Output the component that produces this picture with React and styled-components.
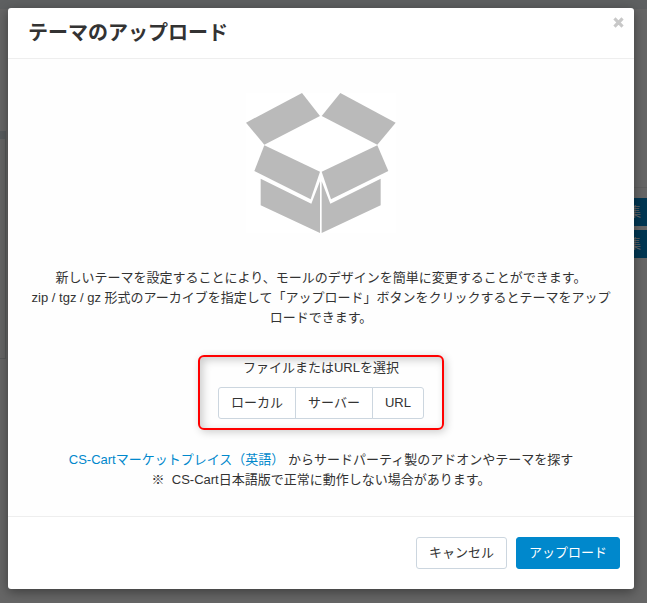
/* eslint-disable react/prop-types */
import styled, { createGlobalStyle } from 'styled-components'

const GlobalStyle = createGlobalStyle`
  *,
  *::before,
  *::after {
    box-sizing: border-box;
  }

  body {
    margin: 0;
    background-color: #fff;
    color: #333;
    font-family: 'Liberation Sans', 'Noto Sans CJK JP', sans-serif;
    font-size: 13px;
    line-height: 20px;
  }

  h3,
  p {
    margin: 0;
  }
`

const Page = styled.div`
  position: relative;
  min-height: 100vh;
  overflow: hidden;
`

const Under = styled.div`
  position: absolute;
  inset: 0;
`

const TopBar = styled.div`
  height: 9px;
  background-color: #eceff3;
`

const PageContent = styled.div`
  display: flex;
  justify-content: space-between;
`

const SidePanel = styled.div`
  width: 6px;
  height: 228px;
  margin-top: 122px;
  border: 1px solid #dde0e4;
  border-left: none;
  border-top: 8px solid #dde5ea;
`

const PageActions = styled.div`
  display: flex;
  flex-direction: column;
  gap: 4px;
  width: 40px;
  margin-top: 178px;
  padding-top: 10px;
  border-top: 1px solid #eee;
`

const EditButton = styled.button`
  height: 28px;
  padding: 0 6px;
  border: none;
  background-color: #08c;
  color: #fff;
  font: inherit;
  text-align: right;
  white-space: nowrap;
`

const Backdrop = styled.div`
  position: absolute;
  inset: 0;
  background-color: rgba(0, 0, 0, 0.6);
`

const DialogArea = styled.div`
  position: relative;
  z-index: 1;
  padding: 8px 13px 14px 8px;
`

const Dialog = styled.section`
  border-radius: 3px;
  background-color: #fff;
  box-shadow: 0 3px 12px rgba(0, 0, 0, 0.4);
`

const DialogHeader = styled.header`
  display: flex;
  align-items: flex-start;
  justify-content: space-between;
  height: 51px;
  padding: 9px 10px 0 20px;
  border-bottom: 1px solid #eee;
`

const Title = styled.h3`
  font-size: 20px;
  font-weight: bold;
  line-height: 32px;
`

const CloseButton = styled.button`
  display: flex;
  padding: 0;
  border: none;
  background: none;
  color: #c8c8c8;
  cursor: pointer;

  &:hover {
    color: #888;
  }
`

const DialogBody = styled.div`
  display: flex;
  flex-direction: column;
  align-items: center;
  padding: 34px 20px 26px;
  background-color: #fefefe;
  text-align: center;
`

const BoxIcon = styled.svg`
  width: 150px;
  height: 140px;
  background-color: #fff;
  fill: #bababa;
`

const Description = styled.div`
  margin: 35px 0 27px;
`

const FileChooser = styled.div`
  display: flex;
  flex-direction: column;
  align-items: center;
  gap: 9px;
  padding: 1px 18px 9px;
  border: 2px solid #f00;
  border-radius: 6px;
  box-shadow:
    2px 2px 8px rgba(0, 0, 0, 0.2),
    inset 3px 3px 8px rgba(0, 0, 0, 0.2);
`

const Button = styled.button`
  height: 32px;
  padding: 0 12px;
  border: 1px solid ${(props) => (props.$primary ? '#08c' : '#ccd6df')};
  border-radius: 3px;
  background-color: ${(props) => (props.$primary ? '#08c' : '#fff')};
  color: ${(props) => (props.$primary ? '#fff' : '#333')};
  font: inherit;
  cursor: pointer;
`

const ButtonGroup = styled.div`
  display: flex;

  ${Button} {
    border-radius: 0;
  }

  ${Button} + ${Button} {
    margin-left: -1px;
  }

  ${Button}:first-child {
    border-radius: 3px 0 0 3px;
  }

  ${Button}:last-child {
    border-radius: 0 3px 3px 0;
  }
`

const Marketplace = styled.div`
  margin-top: 20px;
`

const Link = styled.a`
  color: #08c;
  text-decoration: none;

  &:hover {
    text-decoration: underline;
  }
`

const DialogFooter = styled.footer`
  display: flex;
  justify-content: flex-end;
  gap: 9px;
  padding: 20px 14px;
  border-top: 1px solid #eee;
`

const sources = ['ローカル', 'サーバー', 'URL']

function OpenBox() {
  return (
    <BoxIcon viewBox="48 38 450 420" aria-hidden="true">
      <polygon points="216,38 270,107 103,193 48,127" />
      <polygon points="331,38 497,127 442,193 275,107" />
      <polygon points="103,195 270,274 242,357 73,272" />
      <polygon points="442,195 475,272 303,357 275,274" />
      <polygon points="92,295 244,370 270,303 270,458 92,375" />
      <polygon points="452,295 301,370 275,303 275,458 452,375" />
    </BoxIcon>
  )
}

function App() {
  return (
    <Page>
      <GlobalStyle />
      <Under aria-hidden="true">
        <TopBar />
        <PageContent>
          <SidePanel />
          <PageActions>
            <EditButton tabIndex={-1}>編集</EditButton>
            <EditButton tabIndex={-1}>編集</EditButton>
          </PageActions>
        </PageContent>
      </Under>
      <Backdrop />

      <DialogArea>
        <Dialog role="dialog" aria-labelledby="dialog-title">
          <DialogHeader>
            <Title id="dialog-title">テーマのアップロード</Title>
            <CloseButton aria-label="閉じる">
              <svg width="11" height="11" viewBox="0 0 11 11">
                <path
                  d="M2.6 2.6l5.8 5.8M8.4 2.6L2.6 8.4"
                  stroke="currentColor"
                  strokeWidth="3.2"
                  strokeLinecap="square"
                />
              </svg>
            </CloseButton>
          </DialogHeader>

          <DialogBody>
            <OpenBox />
            <Description>
              <p>
                新しいテーマを設定することにより、モールのデザインを簡単に変更することができます。
              </p>
              <p>
                zip / tgz / gz
                形式のアーカイブを指定して「アップロード」ボタンをクリックするとテーマをアップロードできます。
              </p>
            </Description>

            <FileChooser role="group" aria-labelledby="chooser-label">
              <span id="chooser-label">ファイルまたはURLを選択</span>
              <ButtonGroup>
                {sources.map((source) => (
                  <Button key={source}>{source}</Button>
                ))}
              </ButtonGroup>
            </FileChooser>

            <Marketplace>
              <p>
                <Link href="#marketplace">
                  CS-Cartマーケットプレイス（英語）
                </Link>{' '}
                からサードパーティ製のアドオンやテーマを探す
              </p>
              <p>※&nbsp; CS-Cart日本語版で正常に動作しない場合があります。</p>
            </Marketplace>
          </DialogBody>

          <DialogFooter>
            <Button>キャンセル</Button>
            <Button $primary>アップロード</Button>
          </DialogFooter>
        </Dialog>
      </DialogArea>
    </Page>
  )
}

export default App
